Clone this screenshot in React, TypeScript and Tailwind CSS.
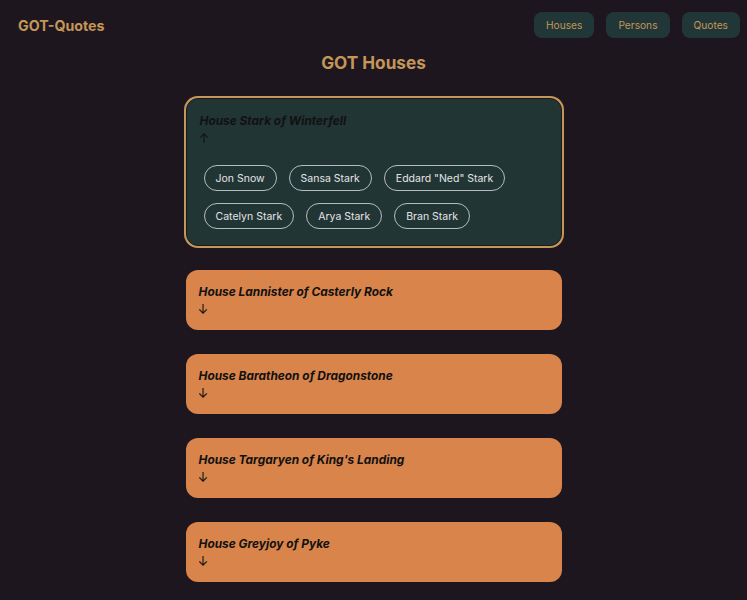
import { useState } from "react";

const houses = [
  {
    name: "House Stark of Winterfell",
    members: ["Jon Snow", "Sansa Stark", 'Eddard "Ned" Stark', "Catelyn Stark", "Arya Stark", "Bran Stark"],
  },
  { name: "House Lannister of Casterly Rock", members: [] },
  { name: "House Baratheon of Dragonstone", members: [] },
  { name: "House Targaryen of King's Landing", members: [] },
  { name: "House Greyjoy of Pyke", members: [] },
];

export default function App() {
  const [open, setOpen] = useState(0);

  return (
    <div className="min-h-screen bg-[#1e161e] font-['Inter',sans-serif]">
      <header className="flex items-center justify-between pl-[18px] pr-[7px] pt-3">
        <a className="pt-[2px] text-[14.2px] font-bold text-[#c49658]">GOT-Quotes</a>
        <nav className="flex gap-3">
          {["Houses", "Persons", "Quotes"].map((l) => (
            <button key={l} className="rounded-lg bg-[#213737] px-3 py-[5px] text-[10.2px] leading-[16px] text-[#c49658]">
              {l}
            </button>
          ))}
        </nav>
      </header>

      <h1 className="mt-[12px] text-center text-[17.2px] leading-[26px] font-bold text-[#c49658]">GOT Houses</h1>

      <div className="mx-auto mt-[22px] flex w-[376px] flex-col gap-6 pb-4">
        {houses.map((h, i) => {
          const isOpen = open === i;
          return (
            <div
              key={h.name}
              onClick={() => setOpen(isOpen ? -1 : i)}
              className={
                isOpen
                  ? "cursor-pointer rounded-xl border border-[#1e161e] bg-[#213535] px-[11px] pt-[12px] pb-[10px] ring-2 ring-[#c49658]"
                  : "cursor-pointer rounded-xl bg-[#d8844a] p-3"
              }
            >
              <div className={isOpen ? "pl-[2px] text-[11.9px] leading-[19px] font-bold italic text-[#111]" : "pl-px text-[11.9px] leading-[19px] font-bold italic text-[#111]"}>
                {h.name}
              </div>
              <div className={isOpen ? "pl-px text-[13px] leading-[17px] text-[#111]" : "text-[13px] leading-[17px] text-[#111]"}>
                {isOpen ? "↑" : "↓"}
              </div>
              {isOpen && (
                <div className="mt-3 flex flex-wrap">
                  {h.members.map((m) => (
                    <span
                      key={m}
                      className="m-1.5 rounded-full border border-[#b8bcbc] px-[11px] py-[4.5px] text-[10.5px] leading-[15px] text-[#e4e4e4]"
                    >
                      {m}
                    </span>
                  ))}
                </div>
              )}
            </div>
          );
        })}
      </div>
    </div>
  );
}
